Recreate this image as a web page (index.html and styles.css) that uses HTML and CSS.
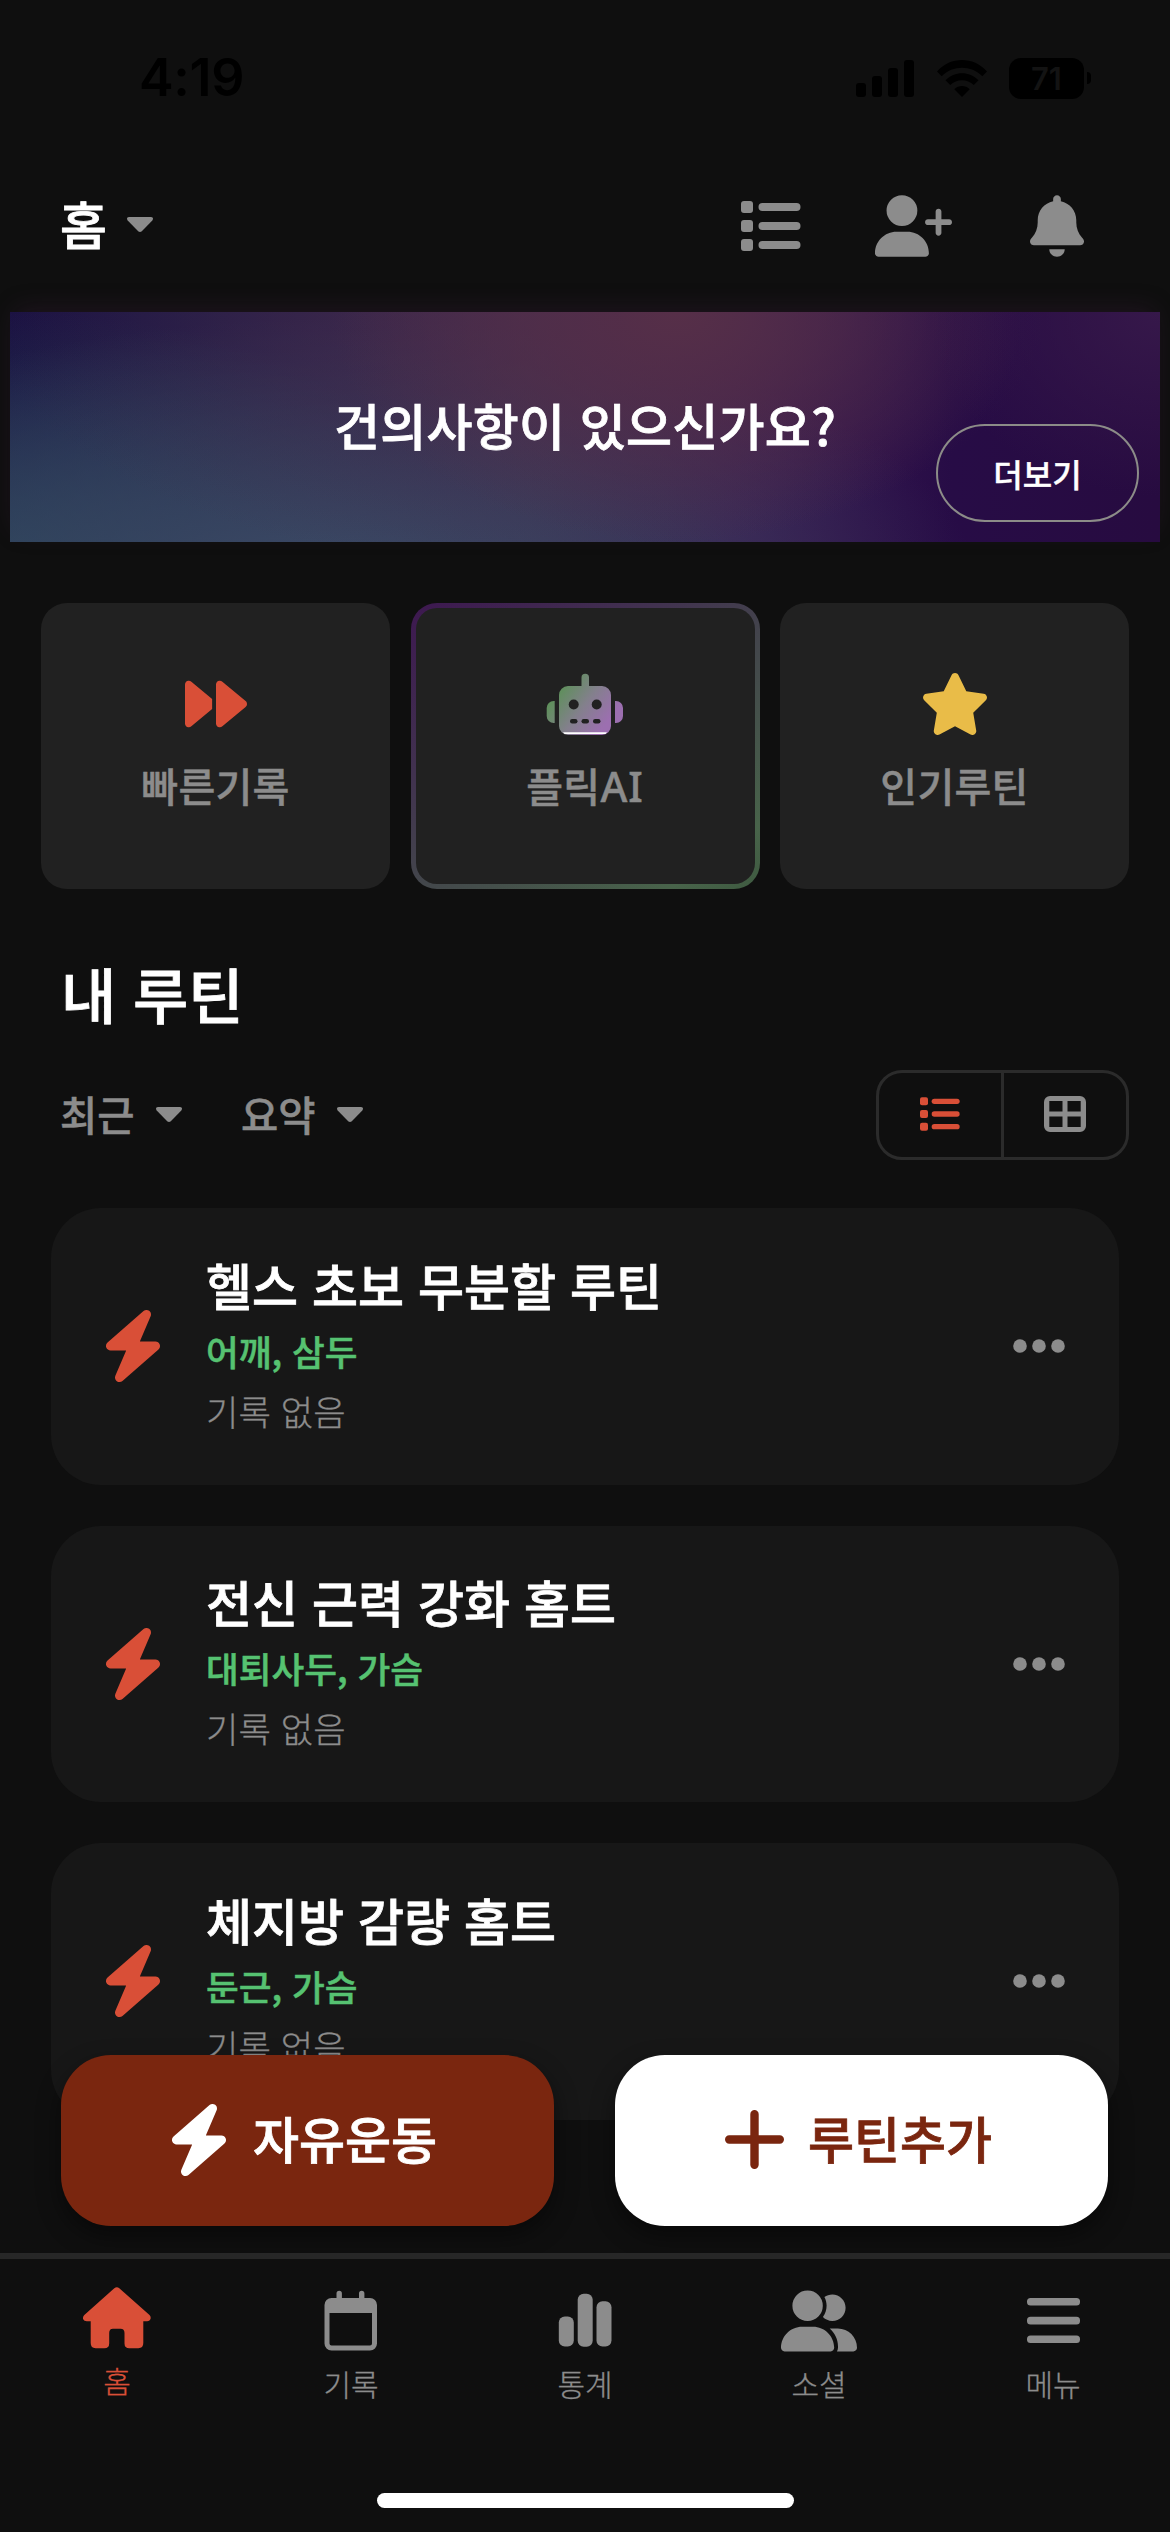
FILE: index.html
```html
<!DOCTYPE html>
<html lang="ko">
<head>
<meta charset="utf-8">
<title>홈</title>
<link rel="stylesheet" href="styles.css">
</head>
<body>
<svg class="defs" width="0" height="0" aria-hidden="true">
  <symbol id="bolt" viewBox="32 0 384 512"><path d="M349.4 44.6c5.9-13.7 1.5-29.7-10.6-38.5s-28.6-8-39.9 1.8l-256 224c-10 8.8-13.6 22.9-8.9 35.3S50.7 288 64 288H175.5L98.6 467.4c-5.9 13.7-1.5 29.7 10.6 38.5s28.6 8 39.9-1.8l256-224c10-8.8 13.6-22.9 8.9-35.3s-16.6-20.7-30-20.7H272.5L349.4 44.6z"/></symbol>
  <symbol id="caret" viewBox="0 0 26 15"><path d="M2 0H24C26 0 26.600 2 25.300 3.400L14.800 14.200C13.800 15.200 12.200 15.200 11.200 14.200L.7 3.400C-.6 2 0 0 2 0Z"/></symbol>
  <symbol id="list" viewBox="0 0 60 50"><rect width="12" height="12" rx="3"/><rect y="19" width="12" height="12" rx="3"/><rect y="38" width="12" height="12" rx="3"/><rect x="17.500" y="2" width="42" height="8" rx="4"/><rect x="17.500" y="21" width="42" height="8" rx="4"/><rect x="17.500" y="40" width="42" height="8" rx="4"/></symbol>
  <symbol id="dots" viewBox="0 0 52 14"><circle cx="7" cy="7" r="6.800"/><circle cx="26" cy="7" r="6.800"/><circle cx="45" cy="7" r="6.800"/></symbol>
</svg>
<div class="screen">
  <div class="status">
    <span class="time">4:19</span>
    <svg class="signal" width="58" height="37" viewBox="0 0 58 37"><rect y="23" width="10" height="14" rx="3"/><rect x="16" y="16" width="10" height="21" rx="3"/><rect x="32" y="8" width="10" height="29" rx="3"/><rect x="48" width="10" height="37" rx="3"/></svg>
    <svg class="wifi" width="50" height="37" viewBox="0 0 50 37"><path d="M25 37L17.300 29.300C21.600 25 28.400 25 32.700 29.300ZM8.500 20.200C17.500 10.800 32.500 10.800 41.500 20.200L36.800 25C30.300 18.600 19.700 18.600 13.200 25ZM0 11.500C13.500-3.800 36.500-3.800 50 11.500L45.300 16.200C34 4.900 16 4.900 4.700 16.200Z"/></svg>
    <span class="battery">71</span>
    <span class="battery-cap"></span>
  </div>

  <header class="header">
    <span class="page-name">홈</span>
    <svg class="caret" width="26" height="15"><use href="#caret"/></svg>
    <svg class="h-list" width="60" height="50"><use href="#list"/></svg>
    <svg class="h-user" width="77" height="62" viewBox="0 0 640 512"><path d="M96 128a128 128 0 1 1 256 0A128 128 0 1 1 96 128zM0 482.3C0 383.8 79.8 304 178.3 304h91.4C368.2 304 448 383.8 448 482.3c0 16.4-13.3 29.7-29.7 29.7H29.7C13.3 512 0 498.7 0 482.3zM504 312V248H440c-13.3 0-24-10.7-24-24s10.7-24 24-24h64V136c0-13.3 10.7-24 24-24s24 10.7 24 24v64h64c13.3 0 24 10.7 24 24s-10.7 24-24 24H552v64c0 13.3-10.7 24-24 24s-24-10.7-24-24z"/></svg>
    <svg class="h-bell" width="54" height="62" viewBox="0 0 448 512"><path d="M224 0c-17.700 0-32 14.300-32 32v19.200C119 66 64 130.600 64 208v18.800c0 47-17.300 92.400-48.500 127.600l-7.400 8.300c-8.400 9.400-10.400 22.900-5.300 34.400S19.400 416 32 416H416c12.600 0 24-7.400 29.200-18.900s3.100-25-5.300-34.400l-7.400-8.300C401.300 319.200 384 273.900 384 226.800V208c0-77.400-55-142-128-156.800V32c0-17.700-14.300-32-32-32zm45.300 493.300c12-12 18.700-28.300 18.700-45.300H160c0 17 6.700 33.300 18.700 45.300s28.300 18.700 45.300 18.700s33.300-6.700 45.300-18.700z"/></svg>
  </header>

  <section class="banner">
    <p class="banner-text">건의사항이 있으신가요?</p>
    <button class="more">더보기</button>
  </section>

  <section class="shortcuts">
    <div class="shortcut">
      <svg class="ff" width="62" height="62" viewBox="0 0 512 512"><path d="M52.500 440.600c-9.500 7.900-22.800 9.700-34.100 4.400S0 428.400 0 416V96C0 83.600 7.200 72.300 18.400 67s24.500-3.600 34.100 4.400L224 214.300V297.700L52.500 440.600zM256 352V96c0-12.400 7.200-23.700 18.400-29s24.500-3.600 34.100 4.400l192 160c7.300 6.100 11.500 15.100 11.500 24.600s-4.200 18.500-11.500 24.600l-192 160c-9.500 7.900-22.800 9.700-34.100 4.400s-18.400-16.600-18.400-29V352z"/></svg>
      <span>빠른기록</span>
    </div>
    <div class="shortcut ai">
      <svg width="78" height="62" viewBox="0 0 78 62">
        <defs><linearGradient id="bot" gradientUnits="userSpaceOnUse" x1="16" y1="14" x2="62" y2="48"><stop offset="0" stop-color="#5f8f5c"/><stop offset=".5" stop-color="#83808c"/><stop offset="1" stop-color="#9c6fb0"/></linearGradient></defs>
        <g fill="url(#bot)"><path d="M35.500 13V4.500a3.750 3.750 0 0 1 7.500 0V13H56a9 9 0 0 1 9 9V53a9 9 0 0 1-9 9H22a9 9 0 0 1-9-9V22a9 9 0 0 1 9-9Z"/><path d="M8.700 28V50H7.700A7 7 0 0 1 .7 43V35A7 7 0 0 1 7.700 28ZM69 28V50H70A7 7 0 0 0 77 43V35A7 7 0 0 0 70 28Z"/></g>
        <g fill="#212121"><circle cx="27.700" cy="31.500" r="5"/><circle cx="50.700" cy="31.500" r="5"/><rect x="24" y="46" width="7.500" height="4.500" rx="2.200"/><rect x="35.500" y="46" width="7.500" height="4.500" rx="2.200"/><rect x="47" y="46" width="7.500" height="4.500" rx="2.200"/></g>
        <path d="M17 59.200H61L59.500 61H18.500Z" fill="#fff"/>
      </svg>
      <span>플릭<span class="latin">AI</span></span>
    </div>
    <div class="shortcut">
      <svg class="star" width="64" height="62" viewBox="24 0 528 512"><path d="M316.900 18C311.600 7 300.400 0 288.100 0s-23.400 7-28.800 18L195 150.300 51.400 171.500c-12 1.800-22 10.200-25.700 21.700s-.7 24.200 7.900 32.700L137.800 329 113.200 474.700c-2 12 3 24.200 12.900 31.300s23 8 33.800 2.300l128.300-68.500 128.300 68.500c10.800 5.700 23.900 4.900 33.800-2.300s14.900-19.300 12.900-31.300L438.500 329 542.700 225.900c8.600-8.500 11.700-21.200 7.900-32.700s-13.700-19.900-25.700-21.700L381.200 150.300 316.900 18z"/></svg>
      <span>인기루틴</span>
    </div>
  </section>

  <h1 class="title">내 루틴</h1>

  <div class="filters">
    <span class="filter">최근</span><svg class="caret" width="26" height="15"><use href="#caret"/></svg>
    <span class="filter second">요약</span><svg class="caret" width="26" height="15"><use href="#caret"/></svg>
    <div class="toggle">
      <span class="seg on"><svg width="40" height="34"><use href="#list"/></svg></span>
      <span class="seg"><svg width="42" height="36" viewBox="0 0 42 36"><path fill-rule="evenodd" d="M6 0H36a6 6 0 0 1 6 6V30a6 6 0 0 1-6 6H6a6 6 0 0 1-6-6V6a6 6 0 0 1 6-6ZM5.300 5V15.500H18.500V5ZM23.500 5V15.500H36.700V5ZM5.300 20.500V31H18.500V20.500ZM23.500 20.500V31H36.700V20.500Z"/></svg></span>
    </div>
  </div>

  <main class="routines">
    <article class="routine">
      <svg class="bolt" width="54" height="72"><use href="#bolt"/></svg>
      <div class="info"><h2>헬스 초보 무분할 루틴</h2><p class="parts">어깨, 삼두</p><p class="log">기록 없음</p></div>
      <svg class="dots" width="52" height="14"><use href="#dots"/></svg>
    </article>
    <article class="routine">
      <svg class="bolt" width="54" height="72"><use href="#bolt"/></svg>
      <div class="info"><h2>전신 근력 강화 홈트</h2><p class="parts">대퇴사두, 가슴</p><p class="log">기록 없음</p></div>
      <svg class="dots" width="52" height="14"><use href="#dots"/></svg>
    </article>
    <article class="routine">
      <svg class="bolt" width="54" height="72"><use href="#bolt"/></svg>
      <div class="info"><h2>체지방 감량 홈트</h2><p class="parts">둔근, 가슴</p><p class="log">기록 없음</p></div>
      <svg class="dots" width="52" height="14"><use href="#dots"/></svg>
    </article>
  </main>

  <div class="actions">
    <button class="action free"><svg width="54" height="72"><use href="#bolt"/></svg><span>자유운동</span></button>
    <button class="action add"><svg width="59" height="59" viewBox="0 0 59 59"><path d="M29.500 4.200V54.800M4.200 29.500H54.800" stroke="#7a260f" stroke-width="8.400" stroke-linecap="round"/></svg><span>루틴추가</span></button>
  </div>

  <nav class="nav">
    <a class="tab active">
      <svg width="68" height="62" viewBox="0 0 68 62"><path d="M31.300 1.300Q33.800-.8 36.300 1.300L66.500 28Q68.300 30 67.400 32.200T64 34.300H60.300V56Q60.300 61.200 55.300 61.200H46.300Q41.500 61.200 41.500 56.500V46Q41.500 41.700 37.500 41.700H30Q26.200 41.700 26.200 46V56.500Q26.200 61.200 21.400 61.200H12.600Q7.700 61.200 7.700 56V34.300H3.800Q1 34.300.2 32.200T1.300 28Z"/></svg>
      <span>홈</span>
    </a>
    <a class="tab">
      <svg width="54" height="62" viewBox="0 0 54 62"><path fill-rule="evenodd" d="M12.500 8V3.500a2.700 2.700 0 0 1 5.400 0V8H35V3.500a2.700 2.700 0 0 1 5.400 0V8H46a7 7 0 0 1 7 7V53.500a7 7 0 0 1-7 7H7.500a7 7 0 0 1-7-7V15a7 7 0 0 1 7-7ZM5.500 23V53.500a2 2 0 0 0 2 2H46a2 2 0 0 0 2-2V23Z"/></svg>
      <span>기록</span>
    </a>
    <a class="tab">
      <svg width="54" height="62" viewBox="0 0 54 62"><rect x=".8" y="26.500" width="15" height="30" rx="6"/><rect x="19.700" y="3.700" width="15" height="53" rx="6"/><rect x="38.500" y="11.300" width="15" height="45.200" rx="6"/></svg>
      <span>통계</span>
    </a>
    <a class="tab">
      <svg width="76" height="61" viewBox="0 0 640 512"><path d="M96 128a128 128 0 1 1 256 0A128 128 0 1 1 96 128zM0 482.300C0 383.800 79.800 304 178.300 304h91.400C368.200 304 448 383.800 448 482.300c0 16.400-13.300 29.700-29.700 29.700H29.700C13.300 512 0 498.700 0 482.300zM609.300 512H471.400c5.400-9.400 8.600-20.300 8.600-32v-8c0-60.700-27.100-115.200-69.800-151.800c2.400-.1 4.700-.2 7.100-.2h61.400C567.800 320 640 392.200 640 481.300c0 17-13.800 30.700-30.700 30.700zM432 256c-31 0-59-12.600-79.300-32.900C372.400 196.500 384 163.600 384 128c0-26.800-6.600-52.100-18.300-74.300C384.300 40.100 407.200 32 432 32c61.900 0 112 50.100 112 112s-50.100 112-112 112z"/></svg>
      <span>소셜</span>
    </a>
    <a class="tab">
      <svg width="53" height="62" viewBox="0 0 53 62"><rect y="8" width="53" height="7.600" rx="3.500"/><rect y="26.800" width="53" height="7.600" rx="3.500"/><rect y="45.500" width="53" height="7.600" rx="3.500"/></svg>
      <span>메뉴</span>
    </a>
  </nav>
  <div class="home-indicator"></div>
</div>
</body>
</html>
```
FILE: styles.css
```css
* { box-sizing: border-box; margin: 0; padding: 0; }
body { background: #0f0f0f; font-family: "Noto Sans CJK KR", "Noto Sans", sans-serif; color: #fff; }
svg { display: block; flex: none; }
.defs { position: absolute; }
button { border: 0; font: inherit; color: inherit; }
span, p, h1, h2 { white-space: nowrap; }

.screen { position: relative; display: flex; flex-direction: column; width: 1170px; height: 2532px; overflow: hidden; }

/* slightly heavier than the 500 weight */
.page-name, .banner-text, .more, .title, .info h2, .action span { -webkit-text-stroke: .8px currentColor; }
.shortcut span, .filter, .parts { -webkit-text-stroke: .5px currentColor; }
.log, .tab span { -webkit-text-stroke: .3px currentColor; }

/* status bar */
.status { display: flex; align-items: center; height: 156px; padding-left: 139px; flex: none; }
.status svg { fill: #000; }
.time { width: 717px; font: 600 52px/60px Inter, sans-serif; color: #000; letter-spacing: -.3px; }
.wifi { margin-left: 23px; }
.battery { width: 75px; height: 41px; margin-left: 22px; border-radius: 12px; background: #000; color: #131313; font: 600 31px/42px Inter, sans-serif; text-align: center; }
.battery-cap { width: 4px; height: 12px; margin-left: 3px; border-radius: 0 4px 4px 0; background: #000; }

/* header */
.header { display: flex; align-items: center; height: 156px; padding: 0 86px 16px 60px; flex: none; }
.header svg { fill: #8c8c8c; }
.header .caret { margin-top: -3px; }
.page-name { width: 67px; margin-top: -6px; font-size: 51px; font-weight: 500; line-height: 60px; }
.h-list { margin-left: auto; }
.h-user { margin-left: 74px; }
.h-bell { margin-left: 78px; }

/* banner */
.banner { position: relative; display: flex; justify-content: center; height: 230px; margin: 0 10px; flex: none;
  background:
    radial-gradient(ellipse 30% 100% at 58% 0%, #562f48 0%, #562f48a0 40%, #562f4800 100%),
    radial-gradient(ellipse 46% 110% at 44% 0%, #4a2d4aa0 0%, #4a2d4a00 100%),
    radial-gradient(ellipse 20% 80% at 100% 0%, #36184a 0%, #36184a00 100%),
    radial-gradient(ellipse 56% 115% at 28% 118%, #3c4b66 0%, #3a4762a0 45%, #3a476200 100%),
    radial-gradient(ellipse 40% 110% at 0% 110%, #264459 0%, #26445900 100%),
    linear-gradient(90deg, #1a1142 0%, #211a46 15%, #39294f 45%, #3a1a50 63%, #270c46 82%, #270b40 100%);
  box-shadow: 0 -8px 24px -6px #4a224a4d; }
.banner-text { padding-top: 77px; font-size: 50px; font-weight: 500; line-height: 70px; letter-spacing: .3px; }
.more { position: absolute; right: 21px; bottom: 20px; width: 203px; height: 98px; border: 2px solid #8c8c88; border-radius: 49px; background: transparent; font-size: 32px; font-weight: 500; line-height: 88px; -webkit-text-stroke-width: .4px; }

/* shortcuts */
.shortcuts { display: grid; grid-template-columns: repeat(3, 349px); column-gap: 20.500px; margin: 61px 0 0 41px; flex: none; }
.shortcut { display: flex; flex-direction: column; align-items: center; height: 286px; padding-top: 70px; border-radius: 26px; background: #212121; color: #8c8c8c; font-size: 40px; font-weight: 500; line-height: 60px; letter-spacing: .3px; }
.shortcut > span { margin-top: 20px; }
.latin { font-family: "Noto Sans", sans-serif; font-size: 41px; letter-spacing: 1px; }
.ai { padding-top: 65px; border: 5px solid transparent; background: linear-gradient(#212121, #212121) padding-box, linear-gradient(145deg, #3d1850 0%, #41324f 33%, #43474b 55%, #48634a 88%, #3e5a40 100%) border-box; }
.ff { fill: #d94f37; }
.star { fill: #e9bc48; }

.title { margin: 59px 0 0 61px; font-size: 60px; font-weight: 500; line-height: 90px; flex: none; }

/* filters */
.filters { display: flex; align-items: center; height: 90px; margin: 32px 41px 0 60px; flex: none; }
.filters .caret { fill: #8c8c8c; margin: -2px 0 0 20px; }
.filter { width: 76px; margin-top: -3px; color: #8c8c8c; font-size: 40.500px; font-weight: 500; line-height: 60px; }
.second { margin-left: 59px; }
.toggle { display: flex; width: 253px; height: 90px; margin-left: auto; border: 3px solid #2b2b2b; border-radius: 26px; }
.seg { display: flex; flex: 1; align-items: center; justify-content: center; padding-bottom: 2px; fill: #8c8c8c; }
.on { fill: #d94f37; border-right: 3px solid #2b2b2b; }

/* routine cards */
.routines { display: flex; flex-direction: column; gap: 41px; margin: 48px 51px 0; flex: none; }
.routine { display: flex; align-items: center; height: 276.500px; padding: 0 54px 0 55px; border-radius: 50px; background: #171717; }
.bolt { fill: #d94f37; }
.info { flex: 1; margin: -4px 0 0 46px; }
.info h2 { font-size: 50px; font-weight: 500; line-height: 72px; }
.parts { color: #56c271; font-size: 35.600px; font-weight: 500; line-height: 61px; }
.log { color: #8c8c8c; font-size: 35.300px; font-weight: 300; line-height: 60px; }
.dots { fill: #8c8c8c; }

/* floating actions */
.actions { position: absolute; left: 61px; top: 2055px; display: flex; gap: 61px; }
.action { display: flex; align-items: center; justify-content: center; width: 493px; height: 171px; padding-right: 6px; border-radius: 50px; font-size: 50px; font-weight: 500; line-height: 74px; box-shadow: 0 10px 24px #00000070; }
.action svg { fill: currentColor; margin: -2px 27px 0 0; }
.action span { margin-top: -8px; }
.free { background: #7a260f; color: #fff; }
.add { background: #fff; color: #7a260f; }
.action.add svg { margin-right: 24px; }

/* tab bar */
.nav { position: absolute; left: 0; right: 0; bottom: 0; display: grid; grid-template-columns: repeat(5, 1fr); height: 279px; border-top: 6px solid #272727; background: #0f0f0f; }
.tab { display: flex; flex-direction: column; align-items: center; padding-top: 31px; color: #8c8c8c; font-size: 30px; font-weight: 300; line-height: 44px; }
.tab svg { fill: currentColor; height: 62px; }
.tab span { margin-top: 9px; }
.tab.active { padding-top: 28px; color: #d94f37; }
.home-indicator { position: absolute; left: 377px; bottom: 24px; width: 417px; height: 15px; border-radius: 8px; background: #fff; }
```
